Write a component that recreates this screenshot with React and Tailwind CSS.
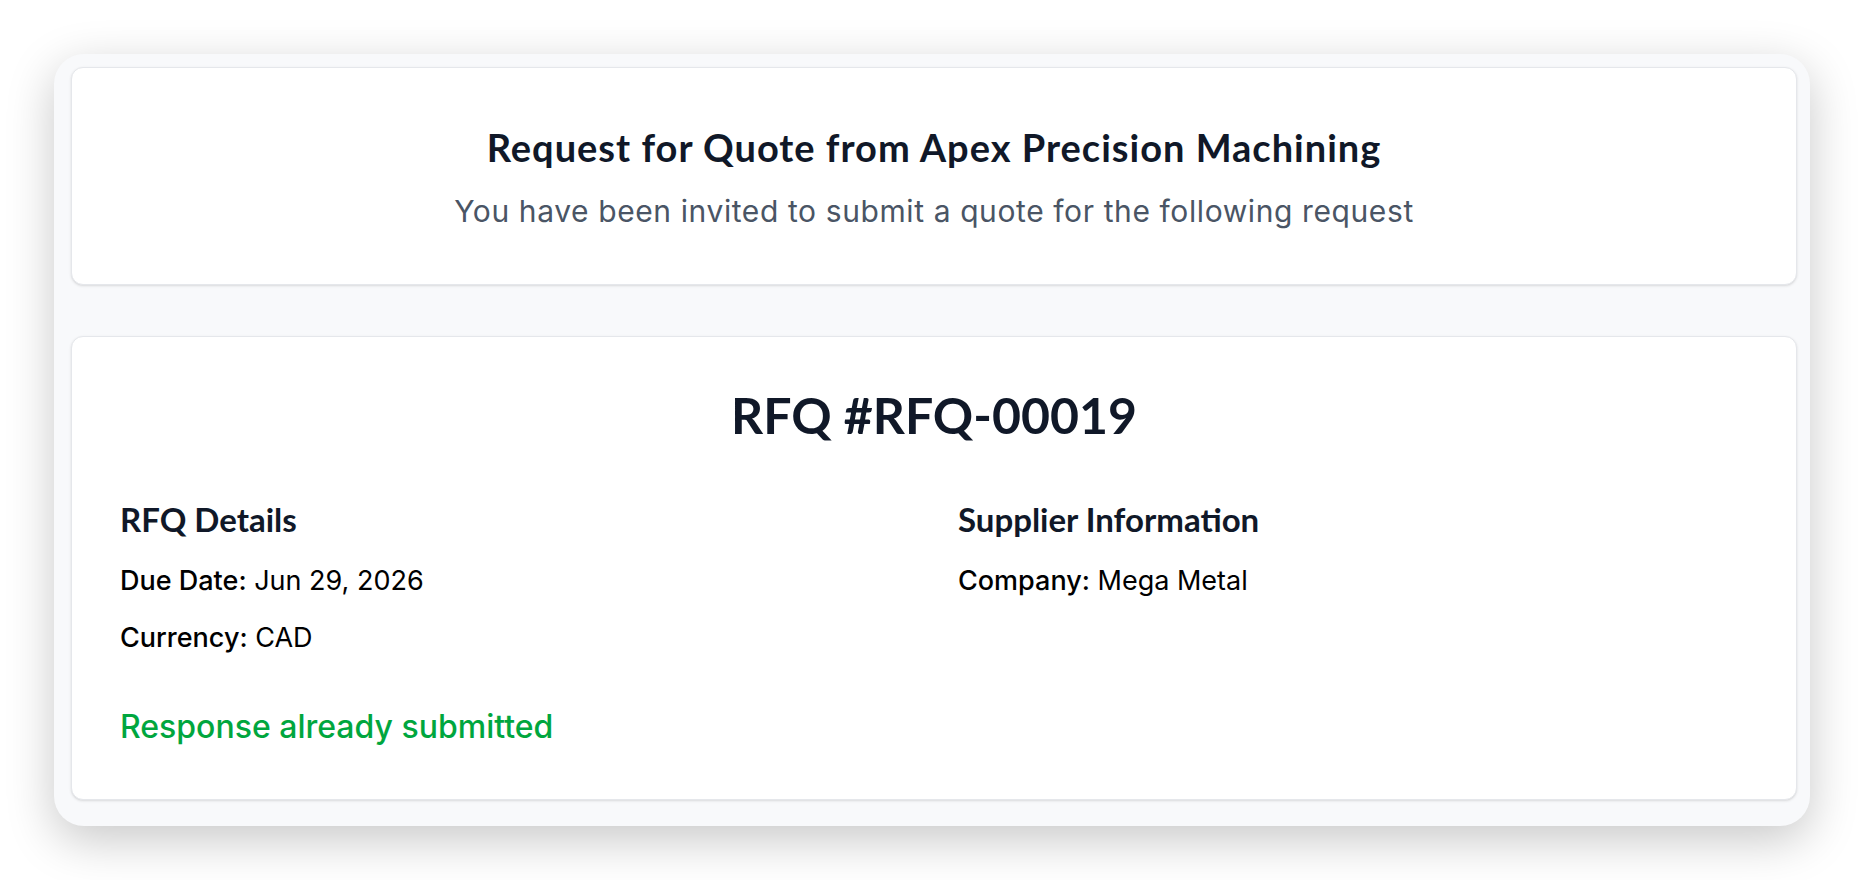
export default function App() {
  return (
    <div className="min-h-screen bg-white pt-[54px] px-[54px] font-['Inter',sans-serif]">
      <div className="bg-[#f8f9fb] rounded-[30px] pt-[13px] pl-[17px] pr-[13px] pb-[26px] shadow-[0_14px_48px_rgba(0,0,0,0.22)]">
        <div className="h-[218px] bg-white border border-gray-200 rounded-xl shadow-sm flex flex-col items-center justify-center gap-[23px]">
          <h1 className="font-['Lato',sans-serif] font-bold text-[38px] leading-[46px] tracking-[1px] text-gray-900">
            Request for Quote from Apex Precision Machining
          </h1>
          <p className="text-[30px] leading-9 tracking-[0.6px] text-gray-600">
            You have been invited to submit a quote for the following request
          </p>
        </div>

        <div className="mt-[51px] bg-white border border-gray-200 rounded-xl shadow-sm px-12 pt-12 pb-[53px]">
          <h2 className="font-['Lato',sans-serif] font-bold text-[50px] leading-[60px] text-gray-900 text-center">
            RFQ #RFQ-00019
          </h2>

          <div className="mt-[55px] grid grid-cols-2 gap-x-12">
            <div>
              <h3 className="font-['Lato',sans-serif] font-bold text-[33px] leading-[38px] text-gray-900">
                RFQ Details
              </h3>
              <div className="mt-[27px] flex flex-col gap-[25px] text-[27px] leading-8 text-black">
                <p>
                  <span className="font-medium">Due Date:</span> Jun 29, 2026
                </p>
                <p>
                  <span className="font-medium">Currency:</span> CAD
                </p>
              </div>
            </div>
            <div>
              <h3 className="font-['Lato',sans-serif] font-bold text-[33px] leading-[38px] text-gray-900">
                Supplier Information
              </h3>
              <div className="mt-[27px] flex flex-col gap-[25px] text-[27px] leading-8 text-black">
                <p>
                  <span className="font-medium">Company:</span> Mega Metal
                </p>
              </div>
            </div>
          </div>

          <p className="mt-[54px] text-[32px] leading-[38px] font-medium text-green-600">
            Response already submitted
          </p>
        </div>
      </div>
    </div>
  );
}
